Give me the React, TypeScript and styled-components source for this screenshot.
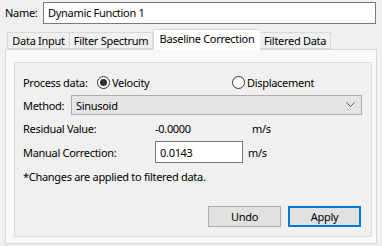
import styled, { createGlobalStyle } from "styled-components";
import { useState } from "react";

const GlobalStyle = createGlobalStyle`
  html, body {
    margin: 0;
    padding: 0;
    background: #f0f0f0;
  }
  * {
    box-sizing: border-box;
  }
`;

// Styled Components
const Window = styled.div`
  width: 382px;
  height: 246px;
  background: #f0f0f0;
  font-family: "Noto Sans", "Open Sans", sans-serif;
  font-size: 11px;
  letter-spacing: -0.3px;
  color: #000;
  display: flex;
  flex-direction: column;
  overflow: hidden;
`;

const NameRow = styled.div`
  display: flex;
  align-items: center;
  padding: 1px 6px 0 5px;
  height: 24px;
`;

const NameLabel = styled.span`
  width: 38px;
`;

const TextBox = styled.input<{ width?: number }>`
  width: ${(p) => (p.width ? `${p.width}px` : "auto")};
  flex: ${(p) => (p.width ? "none" : "1")};
  height: 22px;
  border: 1px solid #7a7a7a;
  background: #fff;
  font: inherit;
  letter-spacing: inherit;
  padding: 0 4px;
  outline: none;
`;

const TabStrip = styled.div`
  display: flex;
  align-items: flex-end;
  height: 25px;
  padding-left: 7px;
`;

const Tab = styled.div<{ active?: boolean; w: number }>`
  width: ${(p) => p.w}px;
  height: ${(p) => (p.active ? "21px" : "17px")};
  margin: ${(p) => (p.active ? "0 0 -1px" : "0")};
  border: 1px solid #d9d9d9;
  border-bottom: ${(p) => (p.active ? "none" : "1px solid #d9d9d9")};
  border-left: ${(p) => (p.active ? "1px solid #d9d9d9" : "none")};
  border-right: ${(p) => (p.active ? "none" : "1px solid #d9d9d9")};
  background: ${(p) => (p.active ? "#fff" : "#f0f0f0")};
  display: flex;
  align-items: center;
  justify-content: center;
  padding-bottom: ${(p) => (p.active ? "3px" : "0")};
  white-space: nowrap;
  position: relative;
  z-index: ${(p) => (p.active ? 1 : 0)};
  cursor: default;

  &:first-child {
    border-left: 1px solid #d9d9d9;
  }
`;

const Panel = styled.div`
  margin: 0 5px 2px 5px;
  flex: 1;
  border: 1px solid #d9d9d9;
  background: #f9f9f9;
  padding: 12px 4px 6px 8px;
  display: flex;
`;

const Group = styled.div`
  flex: 1;
  border: 1px solid #dcdcdc;
  background: #f0f0f0;
  padding: 6px 0 0 8px;
  display: flex;
  flex-direction: column;
`;

const Row = styled.div<{ gap?: number; h?: number }>`
  display: flex;
  align-items: center;
  height: ${(p) => p.h ?? 20}px;
  margin-top: ${(p) => p.gap ?? 3}px;
`;

const Label = styled.span<{ w?: number }>`
  width: ${(p) => (p.w ? `${p.w}px` : "auto")};
  flex: none;
  white-space: nowrap;
`;

const Radio = styled.label<{ w?: number }>`
  width: ${(p) => (p.w ? `${p.w}px` : "auto")};
  display: flex;
  align-items: center;
  gap: 2px;
  cursor: default;
`;

const RadioCircle = styled.span<{ checked: boolean }>`
  width: 13px;
  height: 13px;
  border-radius: 50%;
  border: 1px solid #333;
  background: #fff;
  display: flex;
  align-items: center;
  justify-content: center;

  &::after {
    content: "";
    width: 7px;
    height: 7px;
    border-radius: 50%;
    background: ${(p) => (p.checked ? "#333" : "transparent")};
  }
`;

const Select = styled.div`
  width: 291px;
  height: 20px;
  border: 1px solid #adadad;
  background: #e5e5e5;
  display: flex;
  align-items: center;
  justify-content: space-between;
  padding: 0 6px 0 4px;
`;

const Value = styled.span`
  width: 97px;
`;

const ButtonRow = styled.div`
  display: flex;
  justify-content: flex-end;
  gap: 7px;
  margin-top: 20px;
  padding-right: 10px;
`;

const Button = styled.button<{ primary?: boolean }>`
  width: 73px;
  height: 21px;
  font: inherit;
  letter-spacing: inherit;
  color: #000;
  background: #e1e1e1;
  border: ${(p) => (p.primary ? "2px solid #0078d7" : "1px solid #adadad")};
  padding: 0;
  cursor: default;
`;

const tabs = [
  { label: "Data Input", w: 63 },
  { label: "Filter Spectrum", w: 83 },
  { label: "Baseline Correction", w: 107 },
  { label: "Filtered Data", w: 71 },
];

const App = () => {
  const [mode, setMode] = useState<"velocity" | "displacement">("velocity");
  const [active, setActive] = useState(2);

  return (
    <Window>
      <GlobalStyle />
      <NameRow>
        <NameLabel>Name:</NameLabel>
        <TextBox defaultValue="Dynamic Function 1" />
      </NameRow>

      <TabStrip>
        {tabs.map((t, i) => (
          <Tab key={t.label} w={t.w} active={i === active} onClick={() => setActive(i)}>
            {t.label}
          </Tab>
        ))}
      </TabStrip>

      <Panel>
        <Group>
          <Row>
            <Label w={74}>Process data:</Label>
            <Radio w={135} onClick={() => setMode("velocity")}>
              <RadioCircle checked={mode === "velocity"} />
              Velocity
            </Radio>
            <Radio onClick={() => setMode("displacement")}>
              <RadioCircle checked={mode === "displacement"} />
              Displacement
            </Radio>
          </Row>

          <Row>
            <Label w={48}>Method:</Label>
            <Select>
              <span>Sinusoid</span>
              <svg width="9" height="6" viewBox="0 0 9 6">
                <path d="M0.5 0.5 L4.5 4.5 L8.5 0.5" fill="none" stroke="#555" strokeWidth="1" />
              </svg>
            </Select>
          </Row>

          <Row>
            <Label w={132}>Residual Value:</Label>
            <Value>-0.0000</Value>
            <Label>m/s</Label>
          </Row>

          <Row h={22}>
            <Label w={132}>Manual Correction:</Label>
            <TextBox width={88} defaultValue="0.0143" />
            <Label style={{ marginLeft: 5 }}>m/s</Label>
          </Row>

          <Row>
            <Label>*Changes are applied to filtered data.</Label>
          </Row>

          <ButtonRow>
            <Button>Undo</Button>
            <Button primary>Apply</Button>
          </ButtonRow>
        </Group>
      </Panel>
    </Window>
  );
};

export default App;
